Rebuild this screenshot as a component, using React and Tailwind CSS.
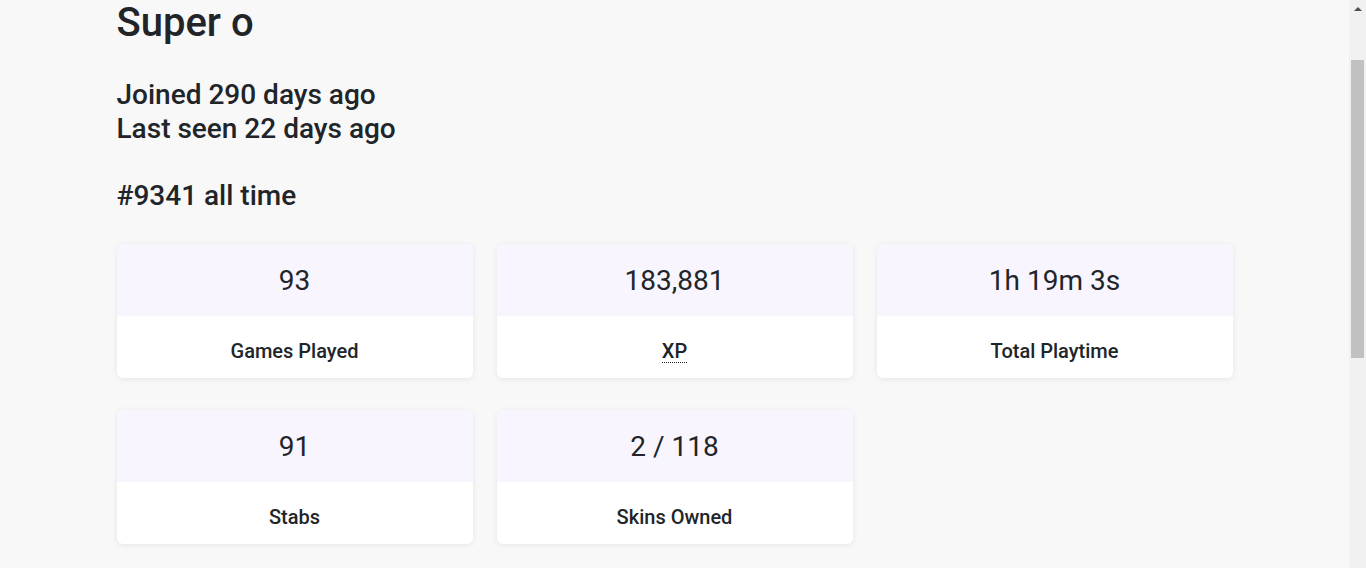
import React from 'react';

const stats = [
    { value: '93', label: 'Games Played' },
    { value: '183,881', label: 'XP', hint: 'Experience points' },
    { value: '1h 19m 3s', label: 'Total Playtime' },
    { value: '91', label: 'Stabs' },
    { value: '2 / 118', label: 'Skins Owned' },
];

const StatCard = ({ value, label, hint }) => (
    <div className="bg-white rounded-md shadow-[0_1px_6px_rgba(0,0,0,0.08)] overflow-hidden">
        <div className="h-[72px] bg-[#f8f5fe] flex items-center justify-center pt-[2px] text-[28px]">
            {value}
        </div>
        <div className="h-[62px] flex items-center justify-center pt-[8px] text-[20px] font-medium">
            {hint ? (
                <abbr title={hint} className="no-underline border-b border-dotted border-[#212529] leading-[22px] cursor-help">
                    {label}
                </abbr>
            ) : (
                label
            )}
        </div>
    </div>
);

// window scrollbar, scrolled a little way down
const Scrollbar = () => (
    <div className="w-[17px] shrink-0 bg-[#f1f1f1] flex flex-col">
        <div className="h-[17px] flex items-center justify-center">
            <div className="w-0 h-0 border-x-[4px] border-x-transparent border-b-[4px] border-b-[#505050]" />
        </div>
        <div className="mt-[43px] mx-[2px] h-[298px] bg-[#c1c1c1]" />
    </div>
);

const App = () => {
    return (
        <div className="h-screen flex overflow-hidden bg-[#f8f8f8] text-[#212529] font-['Roboto',sans-serif]">
            <main className="flex-1 min-w-0">
                <div className="max-w-[1140px] mx-auto px-3">
                    <h1 className="text-[40px] leading-[46px] font-medium">Super o</h1>
                    <div className="mt-[32px] text-[28px] leading-[34px] font-medium">
                        <p>Joined 290 days ago</p>
                        <p>Last seen 22 days ago</p>
                        <p className="mt-[33px]">#9341 all time</p>
                    </div>
                    <div className="mt-[31px] grid grid-cols-3 gap-x-6 gap-y-8 pb-10">
                        {stats.map((s) => (
                            <StatCard key={s.label} {...s} />
                        ))}
                    </div>
                </div>
            </main>
            <Scrollbar />
        </div>
    );
};

export default App;
